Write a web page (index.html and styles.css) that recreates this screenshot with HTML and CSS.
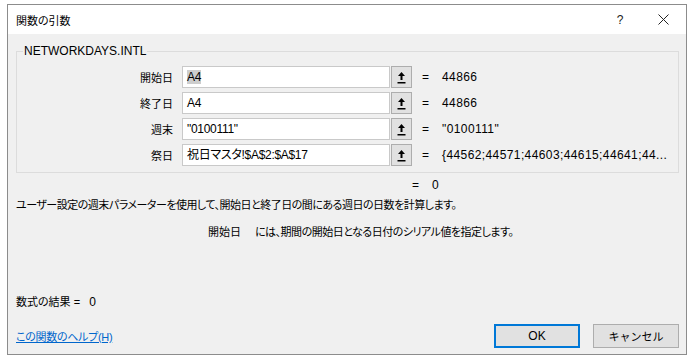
FILE: index.html
```html
<!DOCTYPE html>
<html lang="ja">
<head>
    <meta charset="UTF-8">
    <meta name="viewport" content="width=device-width, initial-scale=1.0">
    <title>関数の引数</title>
    <link rel="stylesheet" href="styles.css">
</head>
<body>
<div class="dialog">
    <div class="titlebar">
        <span class="title">関数の引数</span>
        <span class="help">?</span>
        <span class="close">
            <svg width="11" height="11" viewBox="0 0 11 11"><path d="M0.5 0.5 L10.5 10.5 M10.5 0.5 L0.5 10.5" stroke="#222" stroke-width="1"/></svg>
        </span>
    </div>
    <div class="body">
        <fieldset class="group">
            <legend>NETWORKDAYS.INTL</legend>
            <div class="arg">
                <span class="label">開始日</span>
                <div class="field"><span class="sel">A4</span></div>
                <button type="button" class="ref"><svg width="11" height="13" viewBox="0 0 11 13"><path d="M5.5 1 L9 5 L6.5 5 L6.5 9 L4.5 9 L4.5 5 L2 5 Z M1.5 11 H9.5 V12.5 H1.5 Z" fill="#000"/></svg></button>
                <span class="eq">=</span>
                <span class="val">44866</span>
            </div>
            <div class="arg">
                <span class="label">終了日</span>
                <div class="field">A4</div>
                <button type="button" class="ref"><svg width="11" height="13" viewBox="0 0 11 13"><path d="M5.5 1 L9 5 L6.5 5 L6.5 9 L4.5 9 L4.5 5 L2 5 Z M1.5 11 H9.5 V12.5 H1.5 Z" fill="#000"/></svg></button>
                <span class="eq">=</span>
                <span class="val">44866</span>
            </div>
            <div class="arg">
                <span class="label">週末</span>
                <div class="field">"0100111"</div>
                <button type="button" class="ref"><svg width="11" height="13" viewBox="0 0 11 13"><path d="M5.5 1 L9 5 L6.5 5 L6.5 9 L4.5 9 L4.5 5 L2 5 Z M1.5 11 H9.5 V12.5 H1.5 Z" fill="#000"/></svg></button>
                <span class="eq">=</span>
                <span class="val">"0100111"</span>
            </div>
            <div class="arg">
                <span class="label">祭日</span>
                <div class="field">祝日マスタ!$A$2:$A$17</div>
                <button type="button" class="ref"><svg width="11" height="13" viewBox="0 0 11 13"><path d="M5.5 1 L9 5 L6.5 5 L6.5 9 L4.5 9 L4.5 5 L2 5 Z M1.5 11 H9.5 V12.5 H1.5 Z" fill="#000"/></svg></button>
                <span class="eq">=</span>
                <span class="val">{44562;44571;44603;44615;44641;44...</span>
            </div>
        </fieldset>
        <div class="result"><span class="eq">=</span><span class="val">0</span></div>
        <p class="desc">ユーザー設定の週末パラメーターを使用して、開始日と終了日の間にある週日の日数を計算します。</p>
        <p class="argdesc"><span class="argname">開始日</span>には、期間の開始日となる日付のシリアル値を指定します。</p>
        <p class="formula">数式の結果 =&nbsp;&nbsp;&nbsp;<span class="num">0</span></p>
        <div class="footer">
            <a href="#" class="helplink">この関数のヘルプ(H)</a>
            <div class="buttons">
                <button type="button" class="btn ok">OK</button>
                <button type="button" class="btn">キャンセル</button>
            </div>
        </div>
    </div>
</div>
</body>
</html>
```

FILE: styles.css
```css
*{margin:0;padding:0;box-sizing:border-box;}
body{background:#fff;font-family:"Liberation Sans","Noto Sans CJK JP",sans-serif;font-size:11px;color:#000;font-feature-settings:"palt";}
.dialog{margin:4px 0 0 7px;width:680px;height:351px;border:1px solid #8c8c8c;display:flex;flex-direction:column;background:#f0f0f0;}
.titlebar{height:29px;background:#fff;display:flex;align-items:center;padding-left:8px;}
.title{flex:1;padding-top:1px;}
.help{width:40px;text-align:center;color:#222;font-size:12px;}
.close{width:46px;display:flex;justify-content:center;}
.body{flex:1;padding:0 7px 0 8px;display:flex;flex-direction:column;}
.group{margin-top:10px;border:1px solid #dcdcdc;padding:8px 0 0 0;height:129px;}
.group legend{margin-left:6px;padding:0 1px;line-height:14px;font-size:12px;}
.arg{display:flex;align-items:center;height:22px;margin-bottom:4px;}
.label{width:156px;text-align:right;}
.field{margin-left:9px;width:208px;height:22px;background:#fff;border:1px solid #c9c9c9;padding-left:4px;line-height:20px;white-space:nowrap;overflow:hidden;font-size:12px;letter-spacing:-0.3px;}
.sel{background:#cdcdcd;}
.ref{margin-left:1px;width:21px;height:22px;background:#e1e1e1;border:1px solid #adadad;display:flex;align-items:center;justify-content:center;}
.eq{margin-left:10px;width:20px;font-size:12px;}
.val{white-space:nowrap;font-size:12px;letter-spacing:0.4px;}
.result{display:flex;margin-top:5px;padding-left:396px;height:14px;line-height:14px;}
.result .eq{margin-left:0;}
.desc{margin-top:6px;line-height:14px;letter-spacing:-0.5px;}
.argdesc{margin-top:13px;padding-left:192px;line-height:14px;letter-spacing:-0.5px;}
.argname{margin-right:14px;letter-spacing:0;}
.formula{margin-top:56px;line-height:14px;}
.num{font-size:12px;}
.footer{margin-top:15px;display:flex;align-items:center;justify-content:space-between;}
.helplink{color:#0066cc;text-decoration:underline;letter-spacing:-0.3px;}
.buttons{display:flex;gap:13px;}
.btn{width:86px;height:24px;background:#e1e1e1;border:1px solid #adadad;font-family:inherit;font-size:11px;color:#000;}
.btn.ok{border:2px solid #0078d7;font-size:12px;}
```
